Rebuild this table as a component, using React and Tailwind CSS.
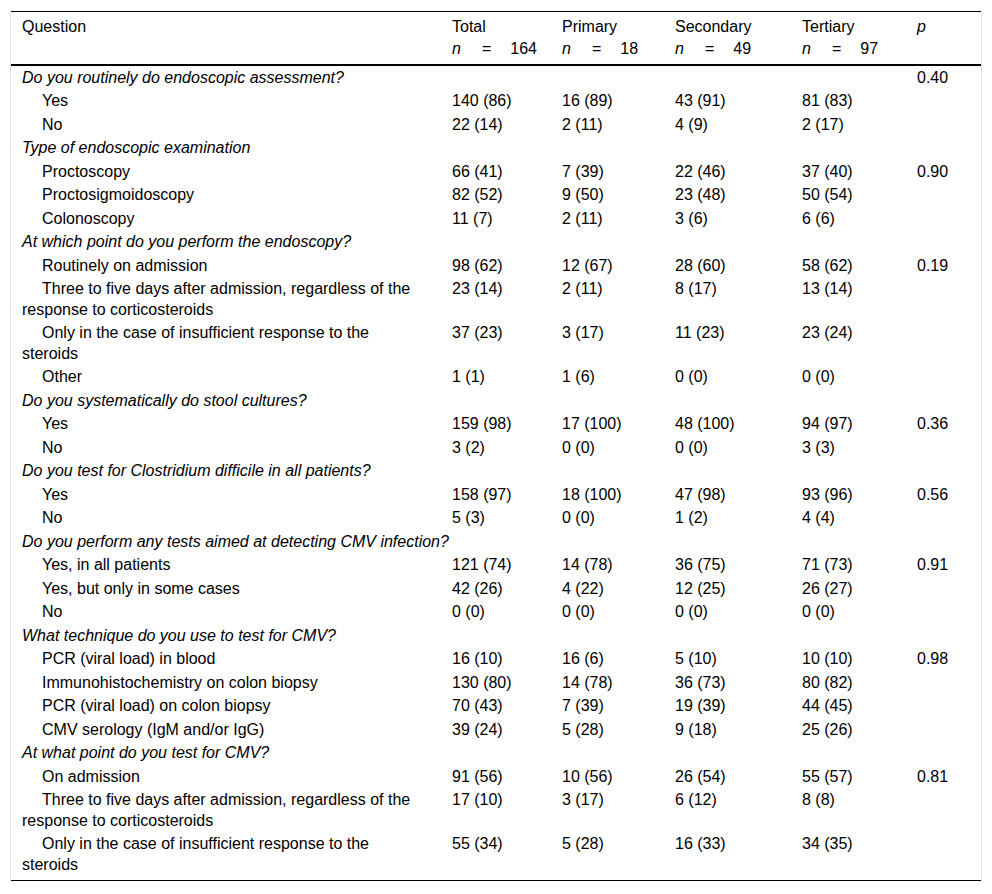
import React from 'react';

const headers = [
  { label: 'Total', n: '164' },
  { label: 'Primary', n: '18' },
  { label: 'Secondary', n: '49' },
  { label: 'Tertiary', n: '97' },
];

// type: 'q' = question heading, 'a' = answer row
const rows = [
  { type: 'q', text: 'Do you routinely do endoscopic assessment?', p: '0.40' },
  { type: 'a', text: 'Yes', v: ['140 (86)', '16 (89)', '43 (91)', '81 (83)'] },
  { type: 'a', text: 'No', v: ['22 (14)', '2 (11)', '4 (9)', '2 (17)'] },
  { type: 'q', text: 'Type of endoscopic examination' },
  { type: 'a', text: 'Proctoscopy', v: ['66 (41)', '7 (39)', '22 (46)', '37 (40)'], p: '0.90' },
  { type: 'a', text: 'Proctosigmoidoscopy', v: ['82 (52)', '9 (50)', '23 (48)', '50 (54)'] },
  { type: 'a', text: 'Colonoscopy', v: ['11 (7)', '2 (11)', '3 (6)', '6 (6)'] },
  { type: 'q', text: 'At which point do you perform the endoscopy?' },
  { type: 'a', text: 'Routinely on admission', v: ['98 (62)', '12 (67)', '28 (60)', '58 (62)'], p: '0.19' },
  { type: 'a', text: ['Three to five days after admission, regardless of the', 'response to corticosteroids'], v: ['23 (14)', '2 (11)', '8 (17)', '13 (14)'] },
  { type: 'a', text: ['Only in the case of insufficient response to the', 'steroids'], v: ['37 (23)', '3 (17)', '11 (23)', '23 (24)'] },
  { type: 'a', text: 'Other', v: ['1 (1)', '1 (6)', '0 (0)', '0 (0)'] },
  { type: 'q', text: 'Do you systematically do stool cultures?' },
  { type: 'a', text: 'Yes', v: ['159 (98)', '17 (100)', '48 (100)', '94 (97)'], p: '0.36' },
  { type: 'a', text: 'No', v: ['3 (2)', '0 (0)', '0 (0)', '3 (3)'] },
  { type: 'q', text: 'Do you test for Clostridium difficile in all patients?' },
  { type: 'a', text: 'Yes', v: ['158 (97)', '18 (100)', '47 (98)', '93 (96)'], p: '0.56' },
  { type: 'a', text: 'No', v: ['5 (3)', '0 (0)', '1 (2)', '4 (4)'] },
  { type: 'q', text: 'Do you perform any tests aimed at detecting CMV infection?' },
  { type: 'a', text: 'Yes, in all patients', v: ['121 (74)', '14 (78)', '36 (75)', '71 (73)'], p: '0.91' },
  { type: 'a', text: 'Yes, but only in some cases', v: ['42 (26)', '4 (22)', '12 (25)', '26 (27)'] },
  { type: 'a', text: 'No', v: ['0 (0)', '0 (0)', '0 (0)', '0 (0)'] },
  { type: 'q', text: 'What technique do you use to test for CMV?' },
  { type: 'a', text: 'PCR (viral load) in blood', v: ['16 (10)', '16 (6)', '5 (10)', '10 (10)'], p: '0.98' },
  { type: 'a', text: 'Immunohistochemistry on colon biopsy', v: ['130 (80)', '14 (78)', '36 (73)', '80 (82)'] },
  { type: 'a', text: 'PCR (viral load) on colon biopsy', v: ['70 (43)', '7 (39)', '19 (39)', '44 (45)'] },
  { type: 'a', text: 'CMV serology (IgM and/or IgG)', v: ['39 (24)', '5 (28)', '9 (18)', '25 (26)'] },
  { type: 'q', text: 'At what point do you test for CMV?' },
  { type: 'a', text: 'On admission', v: ['91 (56)', '10 (56)', '26 (54)', '55 (57)'], p: '0.81' },
  { type: 'a', text: ['Three to five days after admission, regardless of the', 'response to corticosteroids'], v: ['17 (10)', '3 (17)', '6 (12)', '8 (8)'] },
  { type: 'a', text: ['Only in the case of insufficient response to the', 'steroids'], v: ['55 (34)', '5 (28)', '16 (33)', '34 (35)'] },
];

const cell = 'px-[11px] py-[1.5px] align-top text-left font-normal';
const head = 'px-[11px] pt-[4px] pb-[4px] align-top text-left font-normal';

const App = () => {
  return (
    <div className="pt-[11px] pl-[10px] w-[982px] bg-white text-black" style={{ fontFamily: '"Liberation Sans", Arial, sans-serif' }}>
      <div className="border-x border-[#e2e2e2]">
        <table className="w-[970px] table-fixed border-t border-b border-black text-[16px] leading-[20.5px]">
          <colgroup>
            <col className="w-[430px]" />
            <col className="w-[110px]" />
            <col className="w-[113px]" />
            <col className="w-[127px]" />
            <col className="w-[115px]" />
            <col className="w-[75px]" />
          </colgroup>
          <thead>
            <tr className="border-b-2 border-black leading-[22px]">
              <th className={head}>Question</th>
              {headers.map(h => (
                <th key={h.label} className={head}>
                  <div>{h.label}</div>
                  <div className="whitespace-nowrap">
                    <i>n</i>
                    <span className="ml-[21px] mr-[19px]">=</span>
                    {h.n}
                  </div>
                </th>
              ))}
              <th className={head}>
                <i>p</i>
              </th>
            </tr>
          </thead>
          <tbody>
            {rows.map((r, i) => {
              const last = i === rows.length - 1;
              if (r.type === 'q') {
                return (
                  <tr key={i}>
                    <td className={`${cell} italic whitespace-nowrap`}>{r.text}</td>
                    <td className={cell}></td>
                    <td className={cell}></td>
                    <td className={cell}></td>
                    <td className={cell}></td>
                    <td className={cell}>{r.p || ''}</td>
                  </tr>
                );
              }
              return (
                <tr key={i} className={last ? 'h-[48px]' : ''}>
                  <td className={`${cell} indent-5`}>
                    {Array.isArray(r.text) ? (
                      <>
                        {r.text[0]}
                        <br />
                        {r.text[1]}
                      </>
                    ) : (
                      r.text
                    )}
                  </td>
                  {r.v.map((val, j) => (
                    <td key={j} className={`${cell} whitespace-nowrap`}>{val}</td>
                  ))}
                  <td className={cell}>{r.p || ''}</td>
                </tr>
              );
            })}
          </tbody>
        </table>
      </div>
    </div>
  );
};

export default App;
